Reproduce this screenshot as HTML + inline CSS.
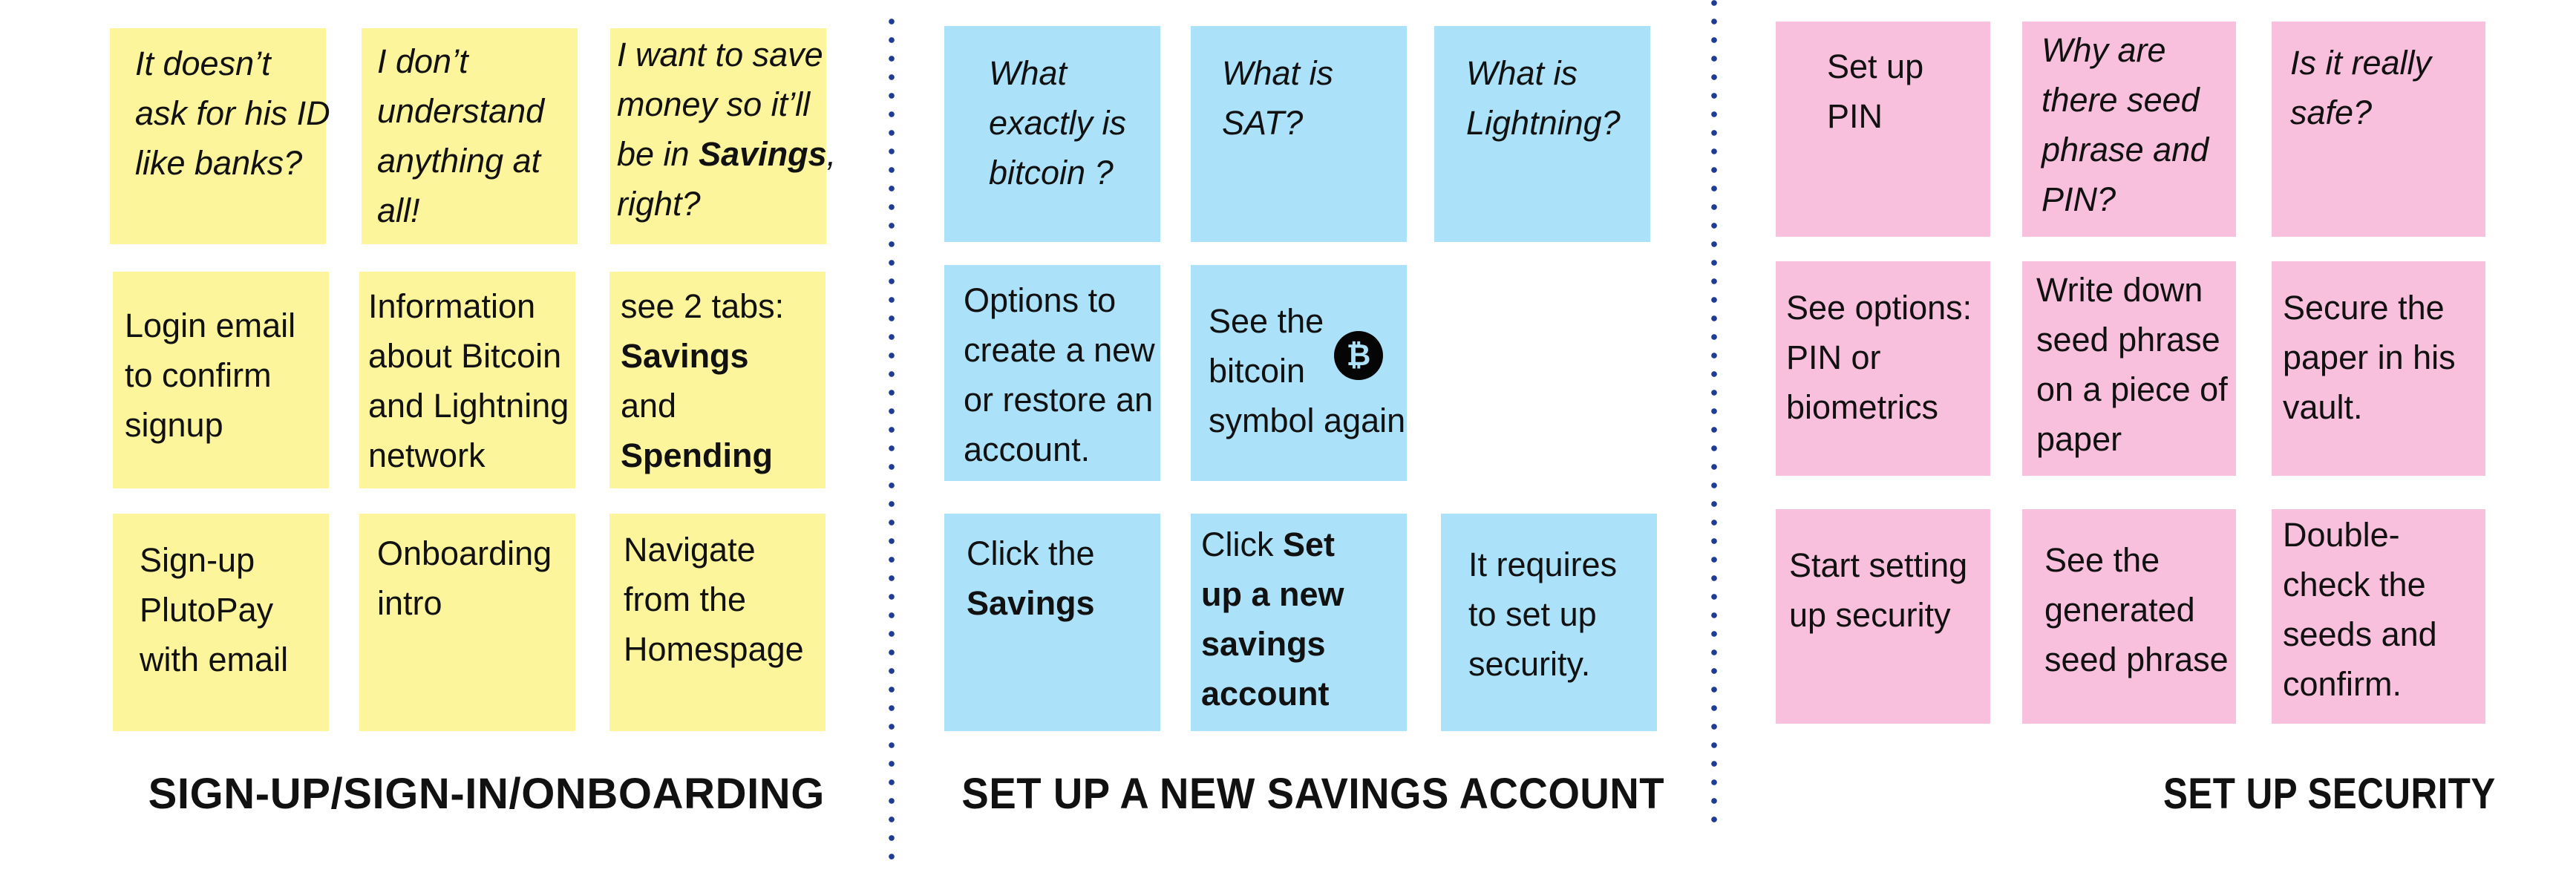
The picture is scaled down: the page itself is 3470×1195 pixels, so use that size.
<!DOCTYPE html>
<html><head><meta charset="utf-8"><style>
html,body{margin:0;padding:0;background:#fff}
body{width:3470px;height:1195px;position:relative;overflow:hidden;font-family:"Liberation Sans",sans-serif;color:#111}
.n{position:absolute}
.y{background:#fdf59b}.b{background:#abe1f9}.p{background:#f8c0dc}
.t{position:absolute;font-size:45px;line-height:67px;white-space:nowrap}
.i{font-style:italic}
.h{position:absolute;top:1030px;font-size:58px;font-weight:bold;letter-spacing:0.6px;white-space:nowrap;line-height:80px;transform-origin:right center}
.dl{position:absolute;width:8px;background:radial-gradient(circle at 4px 4px,#1f3c95 3.6px,transparent 4px) 0 0/8px 25px repeat-y}
</style></head><body>
<div class="dl" style="left:1197px;top:25px;height:1140px"></div>
<div class="dl" style="left:2305px;top:0;height:1112px"></div>

<!-- yellow -->
<div class="n y" style="left:148px;top:38px;width:291px;height:291px"></div>
<div class="n y" style="left:487px;top:38px;width:291px;height:291px"></div>
<div class="n y" style="left:822px;top:38px;width:291px;height:291px"></div>
<div class="n y" style="left:152px;top:366px;width:291px;height:292px"></div>
<div class="n y" style="left:484px;top:366px;width:291px;height:292px"></div>
<div class="n y" style="left:821px;top:366px;width:291px;height:292px"></div>
<div class="n y" style="left:152px;top:692px;width:291px;height:293px"></div>
<div class="n y" style="left:484px;top:692px;width:291px;height:293px"></div>
<div class="n y" style="left:821px;top:692px;width:291px;height:293px"></div>

<div class="t i" style="left:182px;top:52px">It doesn’t<br>ask for his ID<br>like banks?</div>
<div class="t i" style="left:508px;top:49px">I don’t<br>understand<br>anything at<br>all!</div>
<div class="t i" style="left:831px;top:40px">I want to save<br>money so it’ll<br>be in <b>Savings</b>,<br>right?</div>
<div class="t" style="left:168px;top:405px">Login email<br>to confirm<br>signup</div>
<div class="t" style="left:496px;top:379px">Information<br>about Bitcoin<br>and Lightning<br>network</div>
<div class="t" style="left:836px;top:379px">see 2 tabs:<br><b>Savings</b><br>and<br><b>Spending</b></div>
<div class="t" style="left:188px;top:721px">Sign-up<br>PlutoPay<br>with email</div>
<div class="t" style="left:508px;top:712px">Onboarding<br>intro</div>
<div class="t" style="left:840px;top:707px">Navigate<br>from the<br>Homespage</div>
<div class="h" style="right:2359px">SIGN-UP/SIGN-IN/ONBOARDING</div>

<!-- blue -->
<div class="n b" style="left:1272px;top:35px;width:291px;height:291px"></div>
<div class="n b" style="left:1604px;top:35px;width:291px;height:291px"></div>
<div class="n b" style="left:1932px;top:35px;width:291px;height:291px"></div>
<div class="n b" style="left:1272px;top:357px;width:291px;height:291px"></div>
<div class="n b" style="left:1604px;top:357px;width:291px;height:291px"></div>
<div class="n b" style="left:1272px;top:692px;width:291px;height:293px"></div>
<div class="n b" style="left:1604px;top:692px;width:291px;height:293px"></div>
<div class="n b" style="left:1941px;top:692px;width:291px;height:293px"></div>

<div class="t i" style="left:1332px;top:65px">What<br>exactly is<br>bitcoin ?</div>
<div class="t i" style="left:1646px;top:65px">What is<br>SAT?</div>
<div class="t i" style="left:1975px;top:65px">What is<br>Lightning?</div>
<div class="t" style="left:1298px;top:371px">Options to<br>create a new<br>or restore an<br>account.</div>
<div class="t" style="left:1628px;top:399px">See the<br>bitcoin<br>symbol again</div>
<div class="n" style="left:1797px;top:446px;width:66px;height:66px;border-radius:50%;background:#050505;color:#abe1f9;font-size:40px;font-weight:bold;line-height:66px;text-align:center">₿</div>
<div class="t" style="left:1302px;top:712px">Click the<br><b>Savings</b></div>
<div class="t" style="left:1618px;top:700px">Click <b>Set<br>up a new<br>savings<br>account</b></div>
<div class="t" style="left:1978px;top:727px">It requires<br>to set up<br>security.</div>
<div class="h" style="right:1228px;transform:scaleX(0.94)">SET UP A NEW SAVINGS ACCOUNT</div>

<!-- pink -->
<div class="n p" style="left:2392px;top:29px;width:289px;height:290px"></div>
<div class="n p" style="left:2724px;top:29px;width:288px;height:290px"></div>
<div class="n p" style="left:3060px;top:29px;width:288px;height:290px"></div>
<div class="n p" style="left:2392px;top:352px;width:289px;height:289px"></div>
<div class="n p" style="left:2724px;top:352px;width:288px;height:289px"></div>
<div class="n p" style="left:3060px;top:352px;width:288px;height:289px"></div>
<div class="n p" style="left:2392px;top:686px;width:289px;height:289px"></div>
<div class="n p" style="left:2724px;top:686px;width:288px;height:289px"></div>
<div class="n p" style="left:3060px;top:686px;width:288px;height:289px"></div>

<div class="t" style="left:2461px;top:56px">Set up<br>PIN</div>
<div class="t i" style="left:2750px;top:34px">Why are<br>there seed<br>phrase and<br>PIN?</div>
<div class="t i" style="left:3085px;top:51px">Is it really<br>safe?</div>
<div class="t" style="left:2406px;top:381px">See options:<br>PIN or<br>biometrics</div>
<div class="t" style="left:2743px;top:357px">Write down<br>seed phrase<br>on a piece of<br>paper</div>
<div class="t" style="left:3075px;top:381px">Secure the<br>paper in his<br>vault.</div>
<div class="t" style="left:2410px;top:728px">Start setting<br>up security</div>
<div class="t" style="left:2754px;top:721px">See the<br>generated<br>seed phrase</div>
<div class="t" style="left:3075px;top:687px">Double-<br>check the<br>seeds and<br>confirm.</div>
<div class="h" style="right:108px;transform:scaleX(0.85)">SET UP SECURITY</div>
</body></html>
